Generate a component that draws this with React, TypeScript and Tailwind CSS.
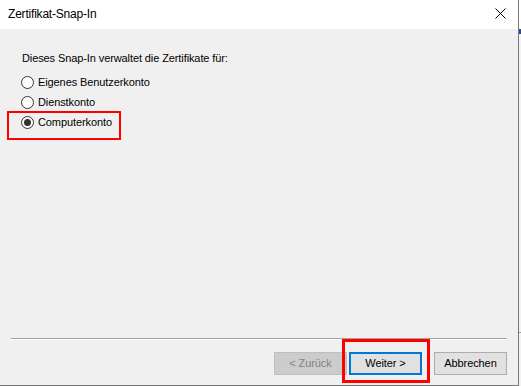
import { useState } from 'react';

const options = ['Eigenes Benutzerkonto', 'Dienstkonto', 'Computerkonto'];

function Radio({ checked }: { checked: boolean }) {
  return (
    <span className="w-[13px] h-[13px] rounded-full border border-[#333333] bg-white flex items-center justify-center shrink-0">
      {checked && <span className="w-[7px] h-[7px] rounded-full bg-[#333333]" />}
    </span>
  );
}

export default function App() {
  const [selected, setSelected] = useState(2);

  return (
    <div
      className="w-[521px] h-[386px] flex bg-white overflow-hidden text-[11px] tracking-[-0.1px] text-black"
      style={{ fontFamily: '"Liberation Sans", Arial, sans-serif' }}
    >
      {/* dialog */}
      <div className="w-[519px] h-full flex flex-col border-r border-b border-[#7a7a7a] relative">
        {/* title bar */}
        <div className="h-[29px] bg-white flex items-center justify-between pl-[8px] pr-[12px] shrink-0">
          <span className="text-[12px] tracking-[-0.2px] leading-none -mt-[2px]">Zertifikat-Snap-In</span>
          <svg width="11" height="11" viewBox="0 0 11 11" className="-mt-[3px]">
            <path d="M0.5 0.5 L10.5 10.5 M10.5 0.5 L0.5 10.5" stroke="#000" strokeWidth="1" />
          </svg>
        </div>

        {/* body */}
        <div className="flex-1 bg-[#f0f0f0] flex flex-col">
          <div className="flex-1 pl-[22px] pt-[22px]">
            <div className="leading-[15px]">Dieses Snap-In verwaltet die Zertifikate für:</div>
            <div className="mt-[6px] flex flex-col">
              {options.map((label, i) => (
                <label
                  key={label}
                  onClick={() => setSelected(i)}
                  className="h-[20px] flex items-center gap-[4px] -ml-[1px] cursor-default"
                >
                  <Radio checked={selected === i} />
                  <span className="leading-none">{label}</span>
                </label>
              ))}
            </div>
          </div>

          {/* separator */}
          <div className="mx-[11px] border-t border-[#a0a0a0] border-b border-b-white" />

          {/* buttons */}
          <div className="flex justify-end pr-[11px] pt-[12px] pb-[10px]">
            <button className="w-[73px] h-[23px] bg-[#cccccc] border border-[#bfbfbf] text-[#838383] leading-none">
              &lt; Zurück
            </button>
            <button className="ml-[2px] w-[73px] h-[23px] bg-[#e1e1e1] border-2 border-[#0078d7] leading-none">
              Weiter &gt;
            </button>
            <button className="ml-[12px] w-[73px] h-[23px] bg-[#e1e1e1] border border-[#adadad] leading-none">
              Abbrechen
            </button>
          </div>
        </div>

        {/* red highlight boxes */}
        <div className="absolute left-[7px] top-[111px] w-[114px] h-[29px] border-2 border-[#ff0000] pointer-events-none" />
        <div className="absolute left-[342px] top-[339px] w-[88px] h-[44px] border-[3px] border-[#ff0000] pointer-events-none" />
      </div>

      {/* window behind */}
      <div className="flex-1 bg-[#f3f3f3] flex flex-col">
        <div className="h-[29px] bg-white" />
        <div className="h-[5px] bg-[#2b4a8c]" />
        <div className="flex-1" />
        <div className="h-px bg-[#a0a0a0] mb-[53px]" />
      </div>
    </div>
  );
}
